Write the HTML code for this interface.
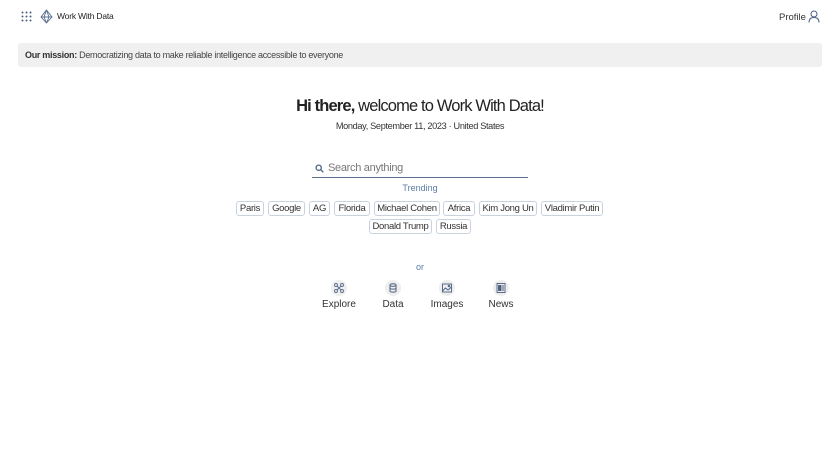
<!DOCTYPE html>
<html><head><style>
*{margin:0;padding:0;box-sizing:border-box}
body{width:840px;height:472px;background:#fff;font-family:"Liberation Sans",sans-serif;color:#333;position:relative;overflow:hidden}
.a{position:absolute}
.chip{position:absolute;height:15px;border:1px solid #c9d3e0;border-radius:3px;font-size:9.5px;line-height:13px;text-align:center;color:#333;letter-spacing:-0.3px;white-space:nowrap}
.ic{position:absolute;width:16px;height:16px;border-radius:50%;background:#eeeeee;top:280px}
.lb{position:absolute;top:299px;font-size:10px;color:#333;width:60px;text-align:center}
</style></head><body>
<svg class="a" style="left:21px;top:11px" width="11" height="11" viewBox="0 0 11 11" fill="#4a5f80">
<circle cx="1.5" cy="1.5" r="1"/><circle cx="5.5" cy="1.5" r="1"/><circle cx="9.5" cy="1.5" r="1"/>
<circle cx="1.5" cy="5.5" r="1"/><circle cx="5.5" cy="5.5" r="1"/><circle cx="9.5" cy="5.5" r="1"/>
<circle cx="1.5" cy="9.5" r="1"/><circle cx="5.5" cy="9.5" r="1"/><circle cx="9.5" cy="9.5" r="1"/></svg>
<svg class="a" style="left:40px;top:9px" width="13" height="15" viewBox="0 0 13 15" fill="none" stroke="#5a6f90" stroke-width="0.9">
<path d="M6.5 1 L12 8 L6.5 14 L1 8 Z M6.5 1 L4 8 L6.5 14 M6.5 1 L9 8 L6.5 14 M1 8 L12 8"/></svg>
<div class="a" style="left:57px;top:11px;font-size:8.5px;color:#222;letter-spacing:-0.2px">Work With Data</div>
<div class="a" style="left:779px;top:12px;font-size:9.5px;color:#333">Profile</div>
<svg class="a" style="left:808px;top:10px" width="12" height="13" viewBox="0 0 12 13" fill="none" stroke="#4a5f80" stroke-width="1"><circle cx="6" cy="4" r="3"/><path d="M1 12.5 C1 9 3 7.5 6 7.5 C9 7.5 11 9 11 12.5"/></svg>
<div class="a" style="left:18px;top:43px;width:804px;height:24px;background:#f0f0f0;border-radius:3px;font-size:9px;line-height:24px;padding-left:7px;color:#444;letter-spacing:-0.3px"><b style="color:#333">Our mission:</b> Democratizing data to make reliable intelligence accessible to everyone</div>
<div class="a" style="left:0;width:840px;top:97px;text-align:center;font-size:16.5px;color:#222;letter-spacing:-0.85px"><b>Hi there,</b> welcome to Work With Data!</div>
<div class="a" style="left:0;width:840px;top:121px;text-align:center;font-size:9.2px;color:#333;letter-spacing:-0.35px">Monday, September 11, 2023 · United States</div>
<svg class="a" style="left:315px;top:164px" width="9" height="9" viewBox="0 0 9 9" fill="none" stroke="#4a5f80" stroke-width="1.3"><circle cx="3.7" cy="3.7" r="2.6"/><path d="M5.6 5.6 L8.3 8.3"/></svg>
<div class="a" style="left:328px;top:162px;font-size:11px;color:#777;letter-spacing:-0.3px">Search anything</div>
<div class="a" style="left:312px;top:177px;width:216px;height:1px;background:#5a6f90"></div>
<div class="a" style="left:0;width:840px;top:183px;text-align:center;font-size:9px;color:#5a7ca8">Trending</div>
<div class="chip" style="left:236px;top:201px;width:28px">Paris</div>
<div class="chip" style="left:268px;top:201px;width:37px">Google</div>
<div class="chip" style="left:309px;top:201px;width:21px">AG</div>
<div class="chip" style="left:334px;top:201px;width:36px">Florida</div>
<div class="chip" style="left:374px;top:201px;width:66px">Michael Cohen</div>
<div class="chip" style="left:443px;top:201px;width:32px">Africa</div>
<div class="chip" style="left:479px;top:201px;width:58px">Kim Jong Un</div>
<div class="chip" style="left:541px;top:201px;width:62px">Vladimir Putin</div>
<div class="chip" style="left:369px;top:219px;width:63px">Donald Trump</div>
<div class="chip" style="left:436px;top:219px;width:35px">Russia</div>
<div class="a" style="left:0;width:840px;top:262px;text-align:center;font-size:9px;color:#5a7ca8">or</div>
<div class="ic" style="left:331px"><svg width="16" height="16" viewBox="0 0 16 16" fill="none" stroke="#5a6f90" stroke-width="0.9"><circle cx="5" cy="5" r="1.5"/><circle cx="11" cy="5" r="1.5"/><circle cx="5" cy="11" r="1.5"/><circle cx="11" cy="11" r="1.5"/><path d="M6 6 L10 10 M10 6 L6 10"/></svg></div>
<div class="ic" style="left:385px"><svg width="16" height="16" viewBox="0 0 16 16" fill="none" stroke="#4a5f80" stroke-width="1"><ellipse cx="8" cy="5" rx="3" ry="1.3"/><path d="M5 5 V11 C5 12.5 11 12.5 11 11 V5 M5 8 C5 9.5 11 9.5 11 8"/></svg></div>
<div class="ic" style="left:439px"><svg width="16" height="16" viewBox="0 0 16 16" fill="none" stroke="#4a5f80" stroke-width="0.9"><rect x="3.5" y="4" width="9" height="8"/><path d="M3.5 11 L6.5 8 L9 10 L12.5 7"/><circle cx="10" cy="6" r="0.8"/></svg></div>
<div class="ic" style="left:493px"><svg width="16" height="16" viewBox="0 0 16 16" fill="none" stroke="#4a5f80" stroke-width="0.9"><rect x="4" y="3.5" width="8" height="9"/><rect x="5.5" y="5.5" width="2.5" height="5" fill="#4a5f80"/><path d="M9 6 H11 M9 8 H11 M9 10 H11"/></svg></div>
<div class="lb" style="left:309px">Explore</div>
<div class="lb" style="left:363px">Data</div>
<div class="lb" style="left:417px">Images</div>
<div class="lb" style="left:471px">News</div>
</body></html>
